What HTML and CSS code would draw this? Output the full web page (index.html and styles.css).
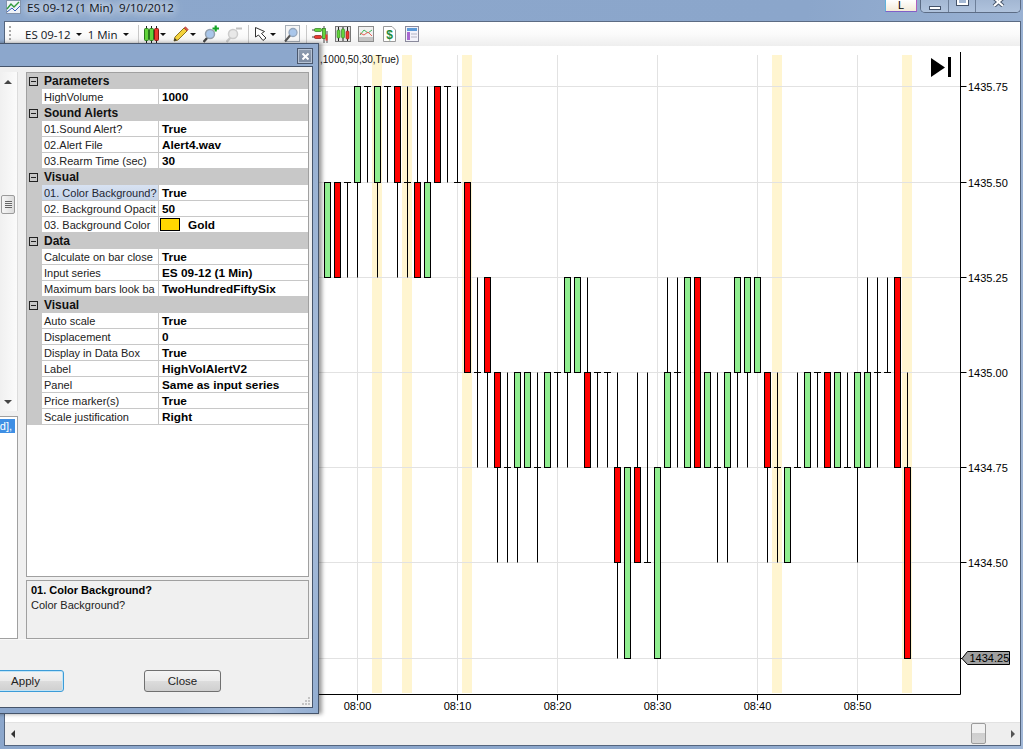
FILE: index.html
```html
<!DOCTYPE html>
<html>
<head>
  <meta charset="UTF-8">
  <title>ES 09-12 (1 Min)</title>
  <link rel="stylesheet" href="styles.css">
</head>
<body>
  <div class="window">
    <!-- Title bar -->
    <div class="title-bar">
      <svg class="app-icon" width="15" height="14" viewBox="0 0 15 14">
        <rect x="0.5" y="0.5" width="14" height="13" fill="#eef2f8" stroke="#8292ab"/>
        <path d="M1 9 L5 4 L8 7 L13 2" fill="none" stroke="#2e9a3c" stroke-width="1.4"/>
        <path d="M1 12 L6 8 L9 11 L14 6" fill="none" stroke="#3560b8"/>
      </svg>
      <span class="title-text">ES 09-12 (1 Min)&nbsp; 9/10/2012</span>
      <div class="title-spacer"></div>
      <div class="link-button">L</div>
      <div class="window-controls">
        <div class="control"><span class="min-glyph"></span></div>
        <div class="control"><span class="max-glyph"></span></div>
        <div class="control control-close">
          <svg width="13" height="7" viewBox="0 0 13 7">
            <path d="M2 -2 L11 6 M11 -2 L2 6" fill="none" stroke="#4a586e" stroke-width="4"/>
            <path d="M2 -2 L11 6 M11 -2 L2 6" fill="none" stroke="#fff" stroke-width="2"/>
          </svg>
        </div>
      </div>
    </div>

    <div class="window-body">
      <!-- Toolbar -->
      <div class="toolbar">
        <span class="grip"></span>
        <span class="tool-label">ES 09-12</span><span class="arrow arrow-label"></span>
        <span class="tool-label">1 Min</span><span class="arrow arrow-label arrow-last"></span>
        <span class="separator"></span>
        <svg class="tool" width="15" height="17" viewBox="0 0 15 17">
          <path d="M2.5 0V17 M7.5 0V17 M12.5 0V17" stroke="#222"/>
          <rect x="0.5" y="2.5" width="4" height="12" rx="1" fill="#63d43c" stroke="#2a7a1c"/>
          <rect x="5.5" y="2.5" width="4" height="12" rx="1" fill="#63d43c" stroke="#2a7a1c"/>
          <rect x="10.5" y="2.5" width="4" height="12" rx="1" fill="#ea3a30" stroke="#8a1a14"/>
        </svg>
        <span class="arrow"></span>
        <svg class="tool" width="16" height="16" viewBox="0 0 16 16">
          <path d="M1 15 L2 11 L11 2 L14 5 L5 14 Z" fill="#f4d23c" stroke="#8c7420"/>
          <path d="M11 2 L12.5 0.8 L15.2 3.6 L14 5 Z" fill="#e0584c" stroke="#a33a30" stroke-width=".6"/>
          <path d="M1 15 L1.7 12 L4 14.3 Z" fill="#333"/>
        </svg>
        <span class="arrow"></span>
        <svg class="tool" width="16" height="18" viewBox="0 0 16 18">
          <path d="M0.5 17 L5 12" stroke="#444" stroke-width="2.4"/>
          <circle cx="7" cy="9" r="4.5" fill="#a9c6ea" stroke="#93a0ae" stroke-width="1.5"/>
          <path d="M9.5 3.5H16 M12.7 0.5V6.5" stroke="#15a326" stroke-width="2.2"/>
        </svg>
        <svg class="tool" width="16" height="18" viewBox="0 0 16 18">
          <path d="M0.5 17 L5 12" stroke="#c9c9c9" stroke-width="2.4"/>
          <circle cx="7" cy="9" r="4.5" fill="#e8e8e8" stroke="#cccccc" stroke-width="1.5"/>
          <path d="M10 3.5H16" stroke="#c2c2c2" stroke-width="2"/>
        </svg>
        <span class="separator"></span>
        <svg class="tool tool-tight" width="15" height="15" viewBox="0 0 15 15">
          <path d="M1.5 0.5 L1.5 10 L4.5 8 L9 13.5 L12 11 L7.5 6.5 L10.5 4.5 Z" fill="#fff" stroke="#333"/>
        </svg>
        <span class="arrow arrow-wide"></span>
        <svg class="tool tool-find" width="16" height="18" viewBox="0 0 16 18">
          <rect x="1.5" y="0.5" width="14" height="16" fill="#f6f6f6" stroke="#a9b0b8"/>
          <circle cx="9" cy="7.5" r="4" fill="#a9c6ea" stroke="#94a6bc" stroke-width="1.3"/>
          <path d="M1 16.5 L6 10.5" stroke="#555" stroke-width="2"/>
        </svg>
        <span class="separator"></span>
        <svg class="tool tool-tight" width="16" height="17" viewBox="0 0 16 17">
          <path d="M0 4H3 M0 11H3 M12 0V17 M15 5V17" stroke="#444"/>
          <rect x="2.5" y="2.5" width="7" height="3" rx="1" fill="#63d43c" stroke="#2a7a1c" stroke-width=".7"/>
          <rect x="2.5" y="9.5" width="7" height="3" rx="1" fill="#ea3a30" stroke="#8a1a14" stroke-width=".7"/>
          <rect x="10.5" y="2.5" width="3" height="10" fill="#63d43c" stroke="#2a7a1c" stroke-width=".7"/>
          <rect x="13.5" y="8.5" width="2" height="6" fill="#ea3a30"/>
        </svg>
        <svg class="tool" width="16" height="16" viewBox="0 0 16 16">
          <rect x="0.5" y="0.5" width="15" height="15" fill="#e4e4e4" stroke="#777"/>
          <path d="M3.5 1V15 M8 1V15 M12.5 1V15" stroke="#222"/>
          <rect x="2" y="4" width="3" height="8" rx="1" fill="#63d43c" stroke="#2a7a1c" stroke-width=".6"/>
          <rect x="6.5" y="3" width="3" height="9" rx="1" fill="#63d43c" stroke="#2a7a1c" stroke-width=".6"/>
          <rect x="11" y="5" width="3" height="8" rx="1" fill="#ea3a30" stroke="#8a1a14" stroke-width=".6"/>
        </svg>
        <svg class="tool" width="16" height="16" viewBox="0 0 16 16">
          <rect x="0.5" y="0.5" width="15" height="15" fill="#f1f1f1" stroke="#8c8c8c"/>
          <path d="M1 11 L15 11 L15 15 L1 15 Z" fill="#c4c4c4"/>
          <path d="M2 9 L6 4 L10 7 L14 4" fill="none" stroke="#3fb55a"/>
          <path d="M2 7 L6 9 L10 6 L14 10" fill="none" stroke="#e56058"/>
        </svg>
        <svg class="tool tool-loose" width="13" height="16" viewBox="0 0 13 16">
          <path d="M0.5 0.5H9L12.5 4V15.5H0.5Z" fill="#fff" stroke="#9a9a9a"/>
          <text class="dollar-glyph" x="6.5" y="13" text-anchor="middle">$</text>
        </svg>
        <svg class="tool tool-loose" width="14" height="16" viewBox="0 0 14 16">
          <rect x="0.5" y="0.5" width="13" height="15" fill="#f2f2fa" stroke="#8a8a9c"/>
          <rect x="2" y="2" width="10" height="3" fill="#5c9ad8"/>
          <rect x="2" y="6" width="3" height="8" fill="#a868d0"/>
          <path d="M6 8H12 M6 11H12" stroke="#b4b4c4"/>
        </svg>
      </div>

      <!-- Chart -->
      <div class="chart-area">
        <svg id="chart" class="chart" width="1015" height="676" viewBox="5 46 1015 676"></svg>
      </div>

      <!-- Horizontal scroll -->
      <div class="h-scroll">
        <span class="scroll-left"></span>
        <span class="scroll-thumb"></span>
        <span class="scroll-right"></span>
      </div>
    </div>
  </div>

  <!-- Indicator dialog -->
  <div class="dialog">
    <div class="dialog-title">
      <div class="dialog-close">
        <svg width="7" height="7" viewBox="0 0 7 7"><path d="M0.5 0.5 L6.5 6.5 M6.5 0.5 L0.5 6.5" stroke="#fff" stroke-width="2"/></svg>
      </div>
    </div>
    <div class="dialog-inner">
      <div class="dialog-main">
        <div class="list-col">
          <div class="list-top">
            <div class="v-scroll">
              <span class="v-arrow"></span>
              <span class="v-thumb"><span class="v-grip"></span></span>
              <span class="v-arrow-down"></span>
            </div>
          </div>
          <div class="list-bottom">
            <div class="list-selected">d],</div>
          </div>
        </div>
        <div class="props-col">
          <div class="prop-grid">
            <div class="group"><span class="toggle"></span>Parameters</div>
            <div class="row"><div class="name">HighVolume</div><div class="value">1000</div></div>
            <div class="group"><span class="toggle"></span>Sound Alerts</div>
            <div class="row"><div class="name">01.Sound Alert?</div><div class="value">True</div></div>
            <div class="row"><div class="name">02.Alert File</div><div class="value">Alert4.wav</div></div>
            <div class="row"><div class="name">03.Rearm Time (sec)</div><div class="value">30</div></div>
            <div class="group"><span class="toggle"></span>Visual</div>
            <div class="row row-active"><div class="name">01. Color Background?</div><div class="value">True</div></div>
            <div class="row"><div class="name">02. Background Opacit</div><div class="value">50</div></div>
            <div class="row"><div class="name">03. Background Color</div><div class="value"><span class="swatch"></span>Gold</div></div>
            <div class="group"><span class="toggle"></span>Data</div>
            <div class="row"><div class="name">Calculate on bar close</div><div class="value">True</div></div>
            <div class="row"><div class="name">Input series</div><div class="value">ES 09-12 (1 Min)</div></div>
            <div class="row"><div class="name">Maximum bars look ba</div><div class="value">TwoHundredFiftySix</div></div>
            <div class="group"><span class="toggle"></span>Visual</div>
            <div class="row"><div class="name">Auto scale</div><div class="value">True</div></div>
            <div class="row"><div class="name">Displacement</div><div class="value">0</div></div>
            <div class="row"><div class="name">Display in Data Box</div><div class="value">True</div></div>
            <div class="row"><div class="name">Label</div><div class="value">HighVolAlertV2</div></div>
            <div class="row"><div class="name">Panel</div><div class="value">Same as input series</div></div>
            <div class="row"><div class="name">Price marker(s)</div><div class="value">True</div></div>
            <div class="row"><div class="name">Scale justification</div><div class="value">Right</div></div>
          </div>
          <div class="prop-help">
            <div class="help-title">01. Color Background?</div>
            <div class="help-text">Color Background?</div>
          </div>
        </div>
      </div>
      <div class="dialog-buttons">
        <button class="btn btn-default">Apply</button>
        <button class="btn">Close</button>
      </div>
      <svg class="resize-grip" width="8" height="8" viewBox="0 0 8 8"><path d="M6 0h2v2H6z M3 3h2v2H3z M6 3h2v2H6z M0 6h2v2H0z M3 6h2v2H3z M6 6h2v2H6z" fill="#c4c4c4"/></svg>
    </div>
  </div>

  <script src="chart.js"></script>
</body>
</html>
```

FILE: styles.css
```css
html, body {
  margin: 0;
  padding: 0;
}

body {
  position: relative;
  width: 1023px;
  height: 749px;
  overflow: hidden;
  font-family: "Liberation Sans", Arial, sans-serif;
  font-size: 11px;
  color: #000;
  background-color: #8ea9ce;
}

/* Main window */
.window {
  height: 749px;
  display: flex;
  flex-direction: column;
  background: linear-gradient(100deg, #8ca7cc 0%, #8ba6cb 70%, #a2b8d7 100%);
}

.title-bar {
  height: 21px;
  display: flex;
  align-items: flex-start;
}

.app-icon {
  margin: 0 0 0 6px;
}

.title-text {
  margin: 1px 0 0 6px;
  font-family: "Open Sans", sans-serif;
  font-size: 11.6px;
  line-height: 13px;
  color: #10151c;
  text-shadow: 0 0 9px #fff, 0 0 9px #fff, 0 0 14px #dfe8f3;
}

.title-spacer {
  flex: 1;
}

.link-button {
  width: 30px;
  height: 11px;
  line-height: 10px;
  text-align: center;
  font-size: 11px;
  background: linear-gradient(#fff, #f3ead8);
  border: 1px solid #5fb2dc;
  border-top: none;
  border-right-color: #b060c0;
  border-bottom-color: #8060c8;
  margin-right: 3px;
}

.window-controls {
  display: flex;
  height: 13px;
  width: 101px;
  margin-right: 2px;
  border: 1px solid #5c6c85;
  border-top: none;
  border-radius: 0 0 5px 5px;
  box-sizing: border-box;
  overflow: hidden;
}

.control {
  width: 28px;
  box-sizing: border-box;
  display: flex;
  justify-content: center;
  border-right: 1px solid #6d7f99;
  background: linear-gradient(#a3b7d3, #b0c3dd);
}

.control:nth-child(2) {
  width: 27px;
}

.control-close {
  flex: 1;
  border-right: none;
}

.min-glyph {
  width: 10px;
  height: 2px;
  margin-top: 6px;
  background: #fff;
  border: 1px solid #45536a;
}

.max-glyph {
  width: 7px;
  height: 3px;
  border: 2px solid #fff;
  border-top: none;
  margin-top: 0;
  outline: 1px solid #45536a;
}

.window-body {
  flex: 1;
  display: flex;
  flex-direction: column;
  margin: 0 2px 3px 4px;
  border: 1px solid #54657e;
  border-top-color: #5b6b83;
  min-height: 0;
  background: #fff;
}

/* Toolbar */
.toolbar {
  height: 24px;
  padding-left: 4px;
  display: flex;
  align-items: center;
  background: linear-gradient(#fff, #fbfbfb 50%, #eeeeee);
}

.grip {
  width: 2px;
  height: 16px;
  margin-right: 14px;
  background: repeating-linear-gradient(#a8a8a8 0, #a8a8a8 2px, transparent 2px, transparent 4px);
}

.tool-label {
  font-family: "Open Sans", sans-serif;
  font-size: 11.5px;
  color: #10151c;
}

.arrow {
  width: 0;
  height: 0;
  margin: 1px 0 0 1px;
  border-left: 3px solid transparent;
  border-right: 3px solid transparent;
  border-top: 3px solid #111;
}

.arrow-wide {
  margin-left: 1px;
}

.arrow-label {
  margin-left: 5px;
  margin-right: 6px;
}

.arrow-last {
  margin-right: 3px;
}

.separator {
  width: 1px;
  height: 18px;
  margin: 0 5px 0 6px;
  background: #c8c8c8;
}

.tool {
  flex: none;
  margin-left: 7px;
}

.separator + .tool {
  margin-left: 0;
}

.tool-find {
  margin-left: 8px;
}

.tool-loose {
  margin-left: 9px;
}

.dollar-glyph {
  font-size: 12px;
  font-weight: bold;
  fill: #1d8a3a;
}

/* Chart */
.chart-area {
  flex: 1;
  min-height: 0;
  background: #fff;
}

.chart {
  display: block;
}

.grid-line {
  stroke: #e2e2e2;
}

.highlight {
  fill: #fff5d0;
}

.axis-line {
  stroke: #000;
}

.wick {
  stroke: #000;
}

.bar-up {
  fill: #90ee90;
  stroke: #000;
}

.bar-down {
  fill: #ff0000;
  stroke: #000;
}

.axis-label {
  font-size: 11px;
  fill: #000;
}

.indicator-label {
  font-size: 10px;
  fill: #111;
}

.price-marker {
  fill: #a0a0a0;
  stroke: #000;
}

/* Scrollbar under the chart */
.h-scroll {
  height: 23px;
  display: flex;
  align-items: flex-start;
  background: #eeeeee;
  border-top: 1px solid #e2e2e2;
  box-sizing: border-box;
}

.scroll-left {
  width: 0;
  height: 0;
  align-self: center;
  margin-left: 6px;
  border-top: 4px solid transparent;
  border-bottom: 4px solid transparent;
  border-right: 4px solid #333;
}

.scroll-thumb {
  width: 13px;
  height: 19px;
  margin-left: 956px;
  border: 1px solid #9b9b9b;
  border-radius: 2px;
  background: linear-gradient(#f2f2f2 45%, #cfcfcf 50%, #d6d6d6);
}

.scroll-right {
  width: 0;
  height: 0;
  align-self: center;
  margin-left: 25px;
  border-top: 4px solid transparent;
  border-bottom: 4px solid transparent;
  border-left: 4px solid #555;
}

/* Indicator dialog */
.dialog {
  position: absolute;
  left: -40px;
  top: 43px;
  width: 359px;
  height: 671px;
  box-sizing: border-box;
  padding: 0 5px 5px;
  display: flex;
  flex-direction: column;
  background: linear-gradient(100deg, #8ca7cc 70%, #a9bedb 90%, #92add1);
  border: 1px solid #46556b;
  box-shadow: 3px 0 4px rgba(0, 0, 0, 0.4);
}

.dialog-title {
  height: 22px;
  flex: none;
  display: flex;
  justify-content: flex-end;
  padding: 4px 0 0;
  box-sizing: border-box;
}

.dialog-close {
  width: 16px;
  height: 16px;
  box-sizing: border-box;
  display: flex;
  align-items: center;
  justify-content: center;
  border: 1px solid #4a586e;
  box-shadow: inset 0 0 0 1px #b5c2d4;
  background: linear-gradient(#8f9db1, #7b8aa1);
}

.dialog-inner {
  position: relative;
  flex: 1;
  min-height: 0;
  display: flex;
  flex-direction: column;
  background: #f0f0f0;
  border: 1px solid #46556b;
}

.dialog-main {
  display: flex;
  gap: 8px;
  padding-right: 3px;
  padding-top: 5px;
  height: 572px;
  box-sizing: border-box;
}

.list-col {
  width: 51px;
  display: flex;
  flex-direction: column;
  gap: 5px;
  box-sizing: border-box;
}

.list-top {
  height: 339px;
  display: flex;
  justify-content: flex-end;
  border-right: 1px solid #dcdcdc;
  background: #fff;
}

.v-scroll {
  position: relative;
  width: 17px;
  height: 100%;
  background: linear-gradient(90deg, #f0f0f0, #fbfbfb);
}

.v-arrow {
  position: absolute;
  top: 8px;
  left: 4px;
  border-left: 4px solid transparent;
  border-right: 4px solid transparent;
  border-bottom: 4px solid #444;
}

.v-arrow-down {
  position: absolute;
  bottom: 7px;
  left: 4px;
  border-left: 4px solid transparent;
  border-right: 4px solid transparent;
  border-top: 4px solid #444;
}

.v-thumb {
  position: absolute;
  top: 123px;
  left: 1px;
  width: 12px;
  height: 17px;
  border: 1px solid #9b9b9b;
  border-radius: 2px;
  background: linear-gradient(90deg, #f6f6f6, #dcdcdc);
  display: flex;
  align-items: center;
  justify-content: center;
}

.v-grip {
  width: 7px;
  height: 7px;
  background: repeating-linear-gradient(#666 0, #666 1px, #eee 1px, #eee 2px);
}

.list-bottom {
  flex: 1;
  box-sizing: border-box;
  padding: 2px 1px 0 0;
  border: 1px solid #a0a0a0;
  border-left: none;
  background: #fff;
}

.list-selected {
  height: 14px;
  line-height: 14px;
  margin-right: 1px;
  padding-right: 3px;
  text-align: right;
  color: #fff;
  background: #3f8fe4;
}

.props-col {
  flex: 1;
  display: flex;
  flex-direction: column;
  gap: 3px;
}

.prop-grid {
  height: 505px;
  box-sizing: border-box;
  background: #fff;
  border: 1px solid #a0a0a0;
}

.group {
  height: 16px;
  line-height: 16px;
  font-weight: bold;
  font-size: 12px;
  background: #c8c8c8;
  display: flex;
  align-items: center;
  padding-left: 2px;
  color: #111;
}

.toggle {
  position: relative;
  box-sizing: border-box;
  width: 9px;
  height: 9px;
  margin-right: 6px;
  border: 1px solid #222;
  flex: none;
}

.toggle::after {
  content: "";
  position: absolute;
  top: 3px;
  left: 1px;
  width: 5px;
  height: 1px;
  background: #222;
}

.row {
  height: 16px;
  line-height: 16px;
  display: flex;
  background: #c8c8c8;
  box-sizing: border-box;
  padding-left: 15px;
}

.name {
  width: 114px;
  height: 15px;
  flex: none;
  padding-left: 2px;
  overflow: hidden;
  white-space: nowrap;
  background: #fff;
  color: #222;
  margin-right: 1px;
}

.row-active .name {
  background: linear-gradient(#d8e2f2, #c4d3e8);
  color: #1e2633;
}

.value {
  flex: 1;
  height: 15px;
  padding-left: 3px;
  background: #fff;
  font-weight: bold;
  font-size: 11.8px;
  display: flex;
  align-items: center;
  padding-top: 1px;
  box-sizing: border-box;
}

.swatch {
  width: 18px;
  height: 11px;
  margin: -1px 8px 0 -2px;
  background: #ffd700;
  border: 1px solid #000;
}

.prop-help {
  height: 59px;
  box-sizing: border-box;
  padding: 2px 4px;
  background: #f0f0f0;
  border: 1px solid #a0a0a0;
}

.help-title {
  font-weight: bold;
  line-height: 15px;
}

.help-text {
  line-height: 15px;
  color: #222;
}

.dialog-buttons {
  display: flex;
  gap: 80px;
  padding: 30px 0 0 20px;
  border-top: 1px solid #f8f8f8;
}

.btn {
  width: 77px;
  height: 22px;
  padding: 0;
  font-family: "Liberation Sans", Arial, sans-serif;
  font-size: 11.5px;
  color: #222;
  border: 1px solid #707070;
  border-radius: 3px;
  background: linear-gradient(#f4f4f4, #ebebeb 48%, #dcdcdc 52%, #cfcfcf);
}

.btn-default {
  border-color: #3c9cd8;
  box-shadow: inset 0 0 0 1px #c2e4f6;
}

.resize-grip {
  position: absolute;
  right: 2px;
  bottom: 2px;
}
```

FILE: chart.js
```js
// Price rows and time scale of the chart
var ROWS = [86, 182, 277, 372, 467, 562, 658];
var PRICE_TOP = 35.75;
var X_START = 327, X_STEP = 10;
var TOP = 55, BOTTOM = 693, AXIS_X = 960.5, AXIS_Y = 694.5;

function y(price) {
  return ROWS[Math.round((PRICE_TOP - price) / 0.25)] + 0.5;
}

// one entry per minute, from 327 on: [kind, body top, body bottom, wick top, wick bottom, tick, wick2 top, wick2 bottom]
// kind: u = up bar, d = down bar, - = no body
var BARS = [
  ['u', 35.5, 35.25],
  ['d', 35.5, 35.25],
  ['-', 0, 0, 35.5, 35.25, 35.5],
  ['u', 35.75, 35.5, 35.5, 35.25],
  ['-', 0, 0, 35.75, 35.5, 35.75],
  ['u', 35.75, 35.5, 35.5, 35.25],
  ['-', 0, 0, 35.75, 35.5, 35.75],
  ['d', 35.75, 35.5, 35.5, 35.25],
  ['-', 0, 0, 35.75, 35.25, 35.5],
  ['d', 35.5, 35.25, 35.75, 35.5],
  ['u', 35.5, 35.25, 35.75, 35.5],
  ['d', 35.75, 35.5],
  ['-', 0, 0, 35.75, 35.5, 35.75],
  ['-', 0, 0, 35.75, 35.5, 35.5],
  ['d', 35.5, 35],
  ['-', 0, 0, 35.25, 34.75, 35],
  ['d', 35.25, 35, 35, 34.75],
  ['d', 35, 34.75, 34.75, 34.5],
  ['-', 0, 0, 35, 34.5, 34.75],
  ['u', 35, 34.75, 34.75, 34.5],
  ['u', 35, 34.75],
  ['-', 0, 0, 35, 34.5, 34.75],
  ['u', 35, 34.75],
  ['-', 0, 0, 35, 34.75, 35],
  ['u', 35.25, 35, 35, 34.75],
  ['u', 35.25, 35],
  ['d', 35, 34.75, 35.25, 35],
  ['-', 0, 0, 35, 34.75, 35],
  ['-', 0, 0, 35, 34.75, 35],
  ['d', 34.75, 34.5, 35, 34.75, null, 34.25, 34.5],
  ['u', 34.75, 34.25],
  ['d', 34.75, 34.5, 35, 34.75],
  ['-', 0, 0, 35, 34.5, 34.5],
  ['u', 34.75, 34.25],
  ['u', 35, 34.75, 35.25, 35],
  ['-', 0, 0, 35.25, 34.75, 35],
  ['u', 35.25, 34.75],
  ['d', 35.25, 34.75],
  ['u', 35, 34.75],
  ['-', 0, 0, 35, 34.5, 34.75],
  ['u', 35, 34.75, 34.75, 34.5],
  ['u', 35.25, 35, 35, 34.75],
  ['u', 35.25, 35, 35, 34.75],
  ['u', 35.25, 35],
  ['d', 35, 34.75, 34.75, 34.5],
  ['-', 0, 0, 35, 34.5, 34.75],
  ['u', 34.75, 34.5],
  ['-', 0, 0, 35, 34.75, 34.75],
  ['u', 35, 34.75],
  ['-', 0, 0, 35, 34.75, 35],
  ['d', 35, 34.75],
  ['u', 35, 34.75],
  ['-', 0, 0, 35, 34.75, 34.75],
  ['u', 35, 34.75, 34.75, 34.5],
  ['u', 35, 34.75, 35.25, 35],
  ['-', 0, 0, 35.25, 34.75, 35],
  ['-', 0, 0, 35.25, 35, 35],
  ['d', 35.25, 34.75],
  ['d', 34.75, 34.25, 35, 34.75]
];

var svg = document.getElementById('chart');
var out = '';

function line(x1, y1, x2, y2, cls) {
  out += '<line class="' + cls + '" x1="' + x1 + '" y1="' + y1 + '" x2="' + x2 + '" y2="' + y2 + '"/>';
}

function label(x, yy, text, anchor) {
  out += '<text class="axis-label" x="' + x + '" y="' + yy + '" text-anchor="' + anchor + '">' + text + '</text>';
}

// highlighted minutes
[372, 402, 462, 772, 902].forEach(function (x) {
  out += '<rect class="highlight" x="' + x + '" y="' + TOP + '" width="10" height="' + (BOTTOM - TOP) + '"/>';
});

// grid
ROWS.forEach(function (row, i) {
  var yy = row + 0.5;
  var price = 1435.75 - i * 0.25;
  line(5, yy, AXIS_X, yy, 'grid-line');
  line(AXIS_X, yy, AXIS_X + 6, yy, 'axis-line');
  if (i < 6) label(968, yy + 4, price.toFixed(2), 'start');
});
['08:00', '08:10', '08:20', '08:30', '08:40', '08:50'].forEach(function (t, i) {
  var x = 357.5 + i * 100;
  line(x, TOP, x, BOTTOM, 'grid-line');
  line(x, AXIS_Y, x, AXIS_Y + 6, 'axis-line');
  label(x, 710, t, 'middle');
});

// bars
BARS.forEach(function (b, i) {
  var x = X_START + i * X_STEP + 0.5;
  if (b[3] !== undefined) line(x, y(b[3]), x, y(b[4]), 'wick');
  if (b[6] !== undefined) line(x, y(b[6]), x, y(b[7]), 'wick');
  if (b[5] !== undefined && b[5] !== null) {
    var t = y(b[5]);
    line(x - 3.5, t, x + 3.5, t, 'wick');
  }
  if (b[0] !== '-') {
    var top = y(b[1]);
    out += '<rect class="' + (b[0] === 'u' ? 'bar-up' : 'bar-down') + '" x="' + (x - 3) + '" y="' + top +
      '" width="6" height="' + (y(b[2]) - top) + '"/>';
  }
});

// axes
line(AXIS_X, 52, AXIS_X, AXIS_Y, 'axis-line');
line(5, AXIS_Y, AXIS_X, AXIS_Y, 'axis-line');

// go-to-end button
out += '<path d="M931 58 L945 67.5 L931 77 Z" fill="#000"/><rect x="948" y="57" width="3" height="20" fill="#000"/>';

// indicator label, last price
out += '<text class="indicator-label" x="320" y="63">,1000,50,30,True)</text>';
out += '<path class="price-marker" d="M962 658.5 L967.5 651.5 H1009.5 V664.5 H967.5 Z"/>';
label(969.5, 662, '1434.25', 'start');

svg.innerHTML = out;
```
